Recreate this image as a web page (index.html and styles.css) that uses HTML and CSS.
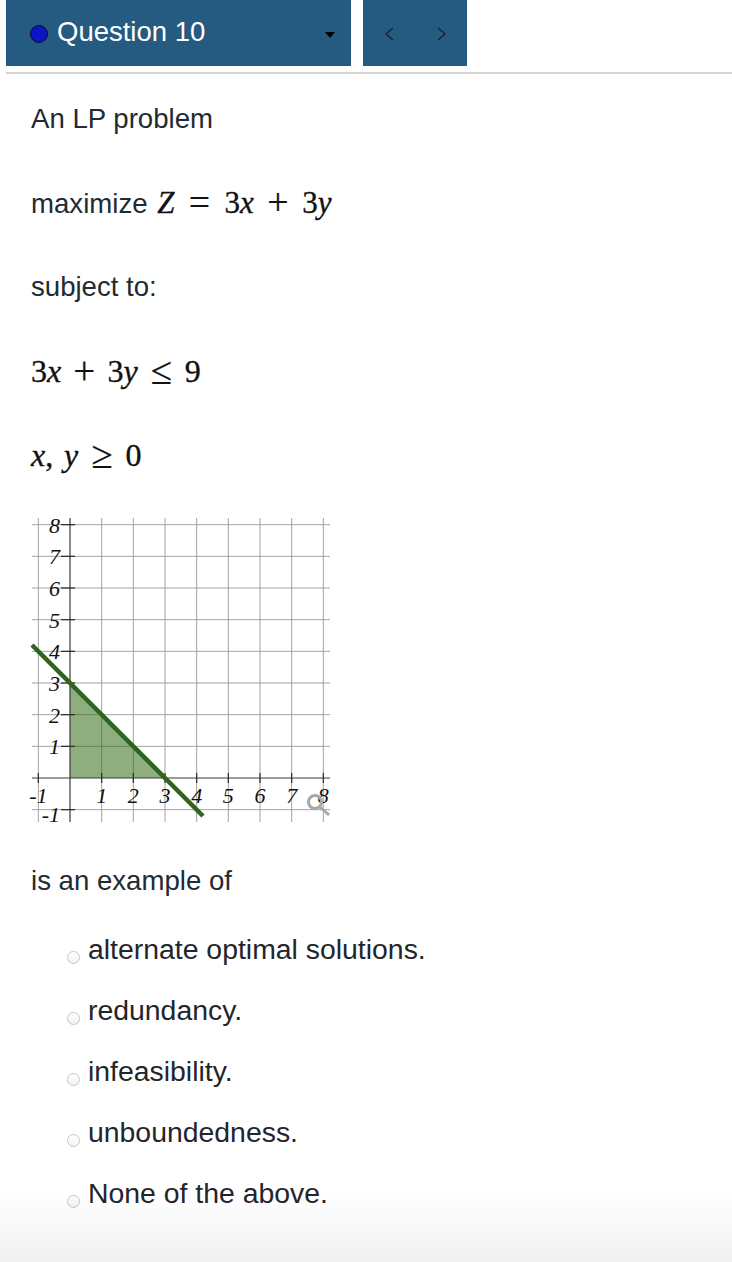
FILE: index.html
```html
<!DOCTYPE html>
<html lang="en">
<head>
<meta charset="utf-8">
<title>Question 10</title>
<link rel="stylesheet" href="styles.css">
</head>
<body>
<header class="qnav">
  <div class="qselect">
    <span class="qdot"></span>
    <span class="qtitle">Question 10</span>
    <span class="caret"></span>
  </div>
  <div class="qarrows">
    <svg class="chevrons" width="104" height="66" viewBox="0 0 104 66">
      <polyline points="30,28 23,34 30,40"/>
      <polyline points="75,28 82,34 75,40"/>
    </svg>
  </div>
</header>
<div class="divider"></div>
<main class="content">
  <p class="line first">An LP problem</p>
  <p class="line">maximize <span class="math inline"><span class="mi">Z</span><span class="mo rel">=</span><span class="mn">3</span><span class="mi">x</span><span class="mo bin">+</span><span class="mn">3</span><span class="mi">y</span></span></p>
  <p class="line">subject to:</p>
  <p class="line math display"><span class="mn">3</span><span class="mi">x</span><span class="mo bin">+</span><span class="mn">3</span><span class="mi">y</span><span class="mo rel">≤</span><span class="mn">9</span></p>
  <p class="line math display"><span class="mi">x</span><span class="mp">,</span><span class="mi">y</span><span class="mo rel">≥</span><span class="mn">0</span></p>

  <svg class="graph" width="300" height="306" viewBox="0 0 300 306">
    <g class="grid">
      <line x1="7.33" y1="2" x2="7.33" y2="306"/>
      <line x1="70.67" y1="2" x2="70.67" y2="306"/>
      <line x1="102.33" y1="2" x2="102.33" y2="306"/>
      <line x1="134" y1="2" x2="134" y2="306"/>
      <line x1="165.67" y1="2" x2="165.67" y2="306"/>
      <line x1="197.33" y1="2" x2="197.33" y2="306"/>
      <line x1="229" y1="2" x2="229" y2="306"/>
      <line x1="260.67" y1="2" x2="260.67" y2="306"/>
      <line x1="292.33" y1="2" x2="292.33" y2="306"/>
      <line x1="1" y1="8.67" x2="299" y2="8.67"/>
      <line x1="1" y1="40.33" x2="299" y2="40.33"/>
      <line x1="1" y1="72" x2="299" y2="72"/>
      <line x1="1" y1="103.67" x2="299" y2="103.67"/>
      <line x1="1" y1="135.33" x2="299" y2="135.33"/>
      <line x1="1" y1="167" x2="299" y2="167"/>
      <line x1="1" y1="198.67" x2="299" y2="198.67"/>
      <line x1="1" y1="230.33" x2="299" y2="230.33"/>
      <line x1="1" y1="293.67" x2="299" y2="293.67"/>
    </g>
    <polygon class="region" points="39,262 134,262 39,167"/>
    <g class="axes">
      <line x1="1" y1="262" x2="299" y2="262"/>
      <line x1="39" y1="2" x2="39" y2="306"/>
    </g>
    <g class="ticks">
      <line x1="30" y1="8.67" x2="44" y2="8.67"/>
      <line x1="30" y1="40.33" x2="44" y2="40.33"/>
      <line x1="30" y1="72" x2="44" y2="72"/>
      <line x1="30" y1="103.67" x2="44" y2="103.67"/>
      <line x1="30" y1="135.33" x2="44" y2="135.33"/>
      <line x1="30" y1="167" x2="44" y2="167"/>
      <line x1="30" y1="198.67" x2="44" y2="198.67"/>
      <line x1="30" y1="230.33" x2="44" y2="230.33"/>
      <line x1="30" y1="293.67" x2="44" y2="293.67"/>
      <line x1="7.33" y1="257" x2="7.33" y2="267"/>
      <line x1="70.67" y1="257" x2="70.67" y2="267"/>
      <line x1="102.33" y1="257" x2="102.33" y2="267"/>
      <line x1="134" y1="257" x2="134" y2="267"/>
      <line x1="165.67" y1="257" x2="165.67" y2="267"/>
      <line x1="197.33" y1="257" x2="197.33" y2="267"/>
      <line x1="229" y1="257" x2="229" y2="267"/>
      <line x1="260.67" y1="257" x2="260.67" y2="267"/>
      <line x1="292.33" y1="257" x2="292.33" y2="267"/>
    </g>
    <g class="ylabels">
      <text x="29" y="17">8</text>
      <text x="29" y="48">7</text>
      <text x="29" y="80">6</text>
      <text x="29" y="112">5</text>
      <text x="29" y="143">4</text>
      <text x="29" y="175">3</text>
      <text x="29" y="207">2</text>
      <text x="29" y="238">1</text>
      <text x="29" y="306">-1</text>
    </g>
    <g class="xlabels">
      <text x="7.33" y="287">-1</text>
      <text x="70.67" y="287">1</text>
      <text x="102.33" y="287">2</text>
      <text x="134" y="287">3</text>
      <text x="165.67" y="287">4</text>
      <text x="197.33" y="287">5</text>
      <text x="229" y="287">6</text>
      <text x="260.67" y="287">7</text>
      <text x="292.33" y="287">8</text>
    </g>
    <line class="constraint" x1="1" y1="129" x2="172" y2="300"/>
    <g class="zoomicon">
      <circle cx="284" cy="286" r="6.5"/>
      <line x1="289" y1="291" x2="298" y2="299"/>
    </g>
  </svg>

  <p class="line after-graph">is an example of</p>

  <ul class="options">
    <li class="option"><span class="radio"></span>alternate optimal solutions.</li>
    <li class="option"><span class="radio"></span>redundancy.</li>
    <li class="option"><span class="radio"></span>infeasibility.</li>
    <li class="option"><span class="radio"></span>unboundedness.</li>
    <li class="option"><span class="radio"></span>None of the above.</li>
  </ul>
</main>
</body>
</html>
```

FILE: styles.css
```css
html, body {
  margin: 0;
  padding: 0;
  background: #ffffff;
}

body {
  font-family: "Liberation Sans", Arial, sans-serif;
  color: #222b33;
  min-height: 1262px;
}

body::after {
  content: "";
  position: fixed;
  left: 0;
  right: 0;
  bottom: 0;
  height: 70px;
  background: linear-gradient(to bottom, rgba(0, 0, 0, 0), rgba(0, 0, 0, 0.06));
  pointer-events: none;
}

/* ---------- header ---------- */
.qnav {
  display: flex;
  gap: 12px;
  padding-left: 6px;
  height: 66px;
}

.qselect {
  width: 345px;
  background: #255b80;
  display: flex;
  align-items: center;
  padding-left: 24px;
  box-sizing: border-box;
}

.qdot {
  width: 18px;
  height: 18px;
  box-sizing: border-box;
  border-radius: 50%;
  background: #0c14c4;
  border: 1px solid #0a0a30;
  margin-top: 2px;
}

.qtitle {
  color: #ffffff;
  font-size: 27.5px;
  line-height: 66px;
  margin-left: 9px;
  padding-bottom: 3px;
}

.caret {
  margin-left: auto;
  margin-right: 16px;
  margin-top: 4px;
  width: 0;
  height: 0;
  border-left: 5px solid transparent;
  border-right: 5px solid transparent;
  border-top: 6px solid #000000;
}

.qarrows {
  width: 104px;
  background: #255b80;
}

.chevrons {
  display: block;
}

.chevrons polyline {
  fill: none;
  stroke: #17222c;
  stroke-width: 1.4;
}

.divider {
  margin: 6px 0 0 6px;
  height: 2px;
  background: #d4d4d4;
}

/* ---------- content ---------- */
.content {
  padding-left: 31px;
  display: flex;
  flex-direction: column;
  align-items: flex-start;
}

.line {
  margin: 44px 0 0 0;
  height: 40px;
  line-height: 40px;
  font-size: 27.6px;
  white-space: nowrap;
}

.line.first {
  margin-top: 25px;
}

.math {
  font-family: "Liberation Serif", "Times New Roman", serif;
  color: #111111;
  -webkit-text-stroke: 0.35px #111111;
}

.math.inline {
  font-size: 31px;
  margin-left: 2px;
}

.math.display {
  font-size: 32px;
}

.mi {
  font-style: italic;
}

.mo {
  font-family: "Liberation Serif", "DejaVu Sans", serif;
  font-size: 1.22em;
  line-height: 0;
  vertical-align: -2px;
  -webkit-text-stroke: 0.2px #111111;
}

.math.inline .mo.rel {
  margin: 0 0.38em;
}

.math.inline .mo.bin {
  margin: 0 0.36em;
}

.math.display .mo.rel {
  margin: 0 0.33em;
}

.math.display .mo.bin {
  margin: 0 0.31em;
}

.mp {
  margin-right: 0.34em;
}

/* ---------- graph ---------- */
.graph {
  display: block;
  margin-top: 41px;
  overflow: visible;
}

.grid line {
  stroke: #a3a3a3;
  stroke-width: 1;
}

.region {
  fill: #336c16;
  fill-opacity: 0.55;
}

.axes line {
  stroke: #3a3a3a;
  stroke-width: 1.2;
}

.ticks line {
  stroke: #2a2a2a;
  stroke-width: 1.2;
}

.ylabels text,
.xlabels text {
  font-family: "Liberation Serif", "Times New Roman", serif;
  font-style: italic;
  font-size: 22px;
  fill: #111111;
}

.ylabels text {
  text-anchor: end;
}

.xlabels text {
  text-anchor: middle;
}

.constraint {
  stroke: #2e6320;
  stroke-width: 4.5;
}

.zoomicon circle,
.zoomicon line {
  fill: none;
  stroke: #a8a8a8;
  stroke-width: 3;
}

.line.after-graph {
  margin-top: 39px;
}

/* ---------- options ---------- */
.options {
  list-style: none;
  margin: 28px 0 0 0;
  padding: 0 0 0 36px;
  display: flex;
  flex-direction: column;
  gap: 21px;
}

.option {
  height: 40px;
  line-height: 40px;
  font-size: 28.4px;
  color: #1f262c;
  white-space: nowrap;
}

.radio {
  display: inline-block;
  width: 13px;
  height: 13px;
  box-sizing: border-box;
  border-radius: 50%;
  border: 1px solid #c6c6c6;
  background: linear-gradient(to bottom, #ffffff, #f2f2f2);
  margin-right: 8px;
  vertical-align: -5px;
}
```
